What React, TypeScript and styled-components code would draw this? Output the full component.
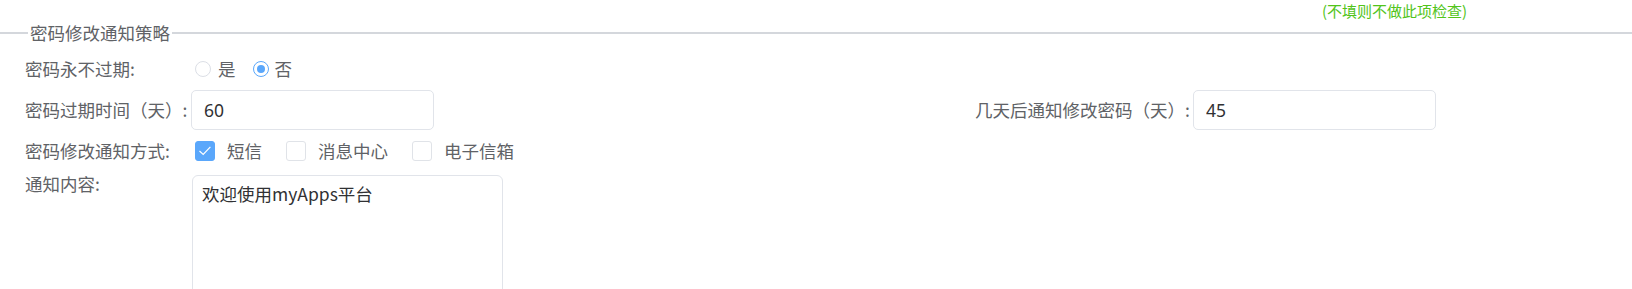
import React from "react";
import styled, { createGlobalStyle } from "styled-components";

const GlobalStyle = createGlobalStyle`
  html, body { margin: 0; padding: 0; background: #ffffff; }
  body {
    font-family: "Noto Sans", "Noto Sans CJK SC", sans-serif;
    color: #606266;
    overflow: hidden;
  }
  * { box-sizing: border-box; }
`;

const Page = styled.div`
  width: 1632px;
  height: 289px;
  overflow: hidden;
`;

const HintRow = styled.div`
  display: flex;
  padding-left: 1322px;
  height: 21px;
  align-items: center;
`;

const Hint = styled.span`
  font-family: "Noto Sans CJK SC", sans-serif;
  font-size: 15px;
  line-height: 20px;
  color: #52c41a;
`;

const Section = styled.fieldset`
  margin: 2px 0 0 0;
  padding: 0;
  border: 0;
  border-top: 2px solid #d4d7dc;
  min-width: 0;
`;

const Legend = styled.legend`
  margin-left: 28px;
  padding: 0 2px;
  font-family: "Noto Sans CJK SC", sans-serif;
  font-size: 17.5px;
  line-height: 20px;
  color: #606266;
`;

const Form = styled.div`
  display: flex;
  flex-direction: column;
  padding: 6px 0 0 25px;
`;

const Row = styled.div<{ $h: number; $top?: number; $cols?: string }>`
  display: grid;
  grid-template-columns: ${(p) => p.$cols || "1fr"};
  height: ${(p) => p.$h}px;
  margin-top: ${(p) => p.$top || 0}px;
`;

const Field = styled.div<{ $align?: string }>`
  display: flex;
  align-items: ${(p) => p.$align || "center"};
`;

const Label = styled.label<{ $w: number; $top?: number }>`
  flex: none;
  width: ${(p) => p.$w}px;
  margin-top: ${(p) => p.$top || 0}px;
  font-family: "Noto Sans CJK SC", sans-serif;
  font-size: 17.5px;
  line-height: 24px;
  color: #606266;
  white-space: nowrap;
`;

const Choices = styled.div`
  display: flex;
  align-items: center;
  padding-left: 4px;
`;

const Choice = styled.span<{ $gap: number; $after: number }>`
  display: inline-flex;
  align-items: center;
  gap: ${(p) => p.$gap}px;
  margin-right: ${(p) => p.$after}px;
  font-family: "Noto Sans CJK SC", sans-serif;
  font-size: 17.5px;
  line-height: 24px;
  color: #606266;
`;

const RadioDot = styled.span<{ $on?: boolean }>`
  width: 16px;
  height: 16px;
  border-radius: 50%;
  border: 1px solid ${(p) => (p.$on ? "#5aa7fb" : "#dcdfe6")};
  background: #fff;
  display: inline-flex;
  align-items: center;
  justify-content: center;
  &::after {
    content: "";
    width: 8px;
    height: 8px;
    border-radius: 50%;
    background: ${(p) => (p.$on ? "#5aa7fb" : "transparent")};
  }
`;

const Box = styled.span<{ $on?: boolean }>`
  width: 20px;
  height: 20px;
  border-radius: 3px;
  border: 1px solid ${(p) => (p.$on ? "#5aa7fb" : "#e0e3e8")};
  background: ${(p) => (p.$on ? "#5aa7fb" : "#fff")};
  display: inline-flex;
  align-items: center;
  justify-content: center;
`;

const TextInput = styled.input`
  width: 243px;
  height: 40px;
  padding: 0 12px;
  border: 1px solid #e1e4ea;
  border-radius: 5px;
  font-family: "Noto Sans", "Noto Sans CJK SC", sans-serif;
  font-size: 17.5px;
  color: #303133;
  outline: none;
  background: #fff;
`;

const TextArea = styled.textarea`
  width: 311px;
  height: 150px;
  padding: 6px 9px;
  border: 1px solid #e1e4ea;
  border-radius: 6px;
  font-family: "Noto Sans CJK SC", sans-serif;
  font-size: 17.5px;
  line-height: 24px;
  color: #303133;
  resize: none;
  outline: none;
  background: #fff;
`;

const Check = () => (
  <svg width="14" height="12" viewBox="0 0 14 12">
    <path d="M1.5 6 L5.2 9.4 L12.4 1.8" fill="none" stroke="#fff" strokeWidth="1.2" />
  </svg>
);

export default function App() {
  return (
    <Page>
      <GlobalStyle />
      <HintRow>
        <Hint>(不填则不做此项检查)</Hint>
      </HintRow>
      <Section>
        <Legend>密码修改通知策略</Legend>
        <Form>
          <Row $h={40}>
            <Field>
              <Label $w={166}>密码永不过期:</Label>
              <Choices>
                <Choice $gap={7} $after={17}>
                  <RadioDot />是
                </Choice>
                <Choice $gap={6} $after={0}>
                  <RadioDot $on />否
                </Choice>
              </Choices>
            </Field>
          </Row>
          <Row $h={42} $cols="950px 1fr">
            <Field>
              <Label $w={166}>密码过期时间（天）:</Label>
              <TextInput defaultValue="60" readOnly />
            </Field>
            <Field>
              <Label $w={218}>几天后通知修改密码（天）:</Label>
              <TextInput defaultValue="45" readOnly />
            </Field>
          </Row>
          <Row $h={40}>
            <Field>
              <Label $w={166}>密码修改通知方式:</Label>
              <Choices>
                <Choice $gap={12} $after={24}>
                  <Box $on>
                    <Check />
                  </Box>
                  短信
                </Choice>
                <Choice $gap={12} $after={24}>
                  <Box />
                  消息中心
                </Choice>
                <Choice $gap={12} $after={0}>
                  <Box />
                  电子信箱
                </Choice>
              </Choices>
            </Field>
          </Row>
          <Row $h={160} $top={4}>
            <Field $align="flex-start">
              <Label $w={167} $top={-3}>通知内容:</Label>
              <TextArea defaultValue="欢迎使用myApps平台" readOnly />
            </Field>
          </Row>
        </Form>
      </Section>
    </Page>
  );
}
